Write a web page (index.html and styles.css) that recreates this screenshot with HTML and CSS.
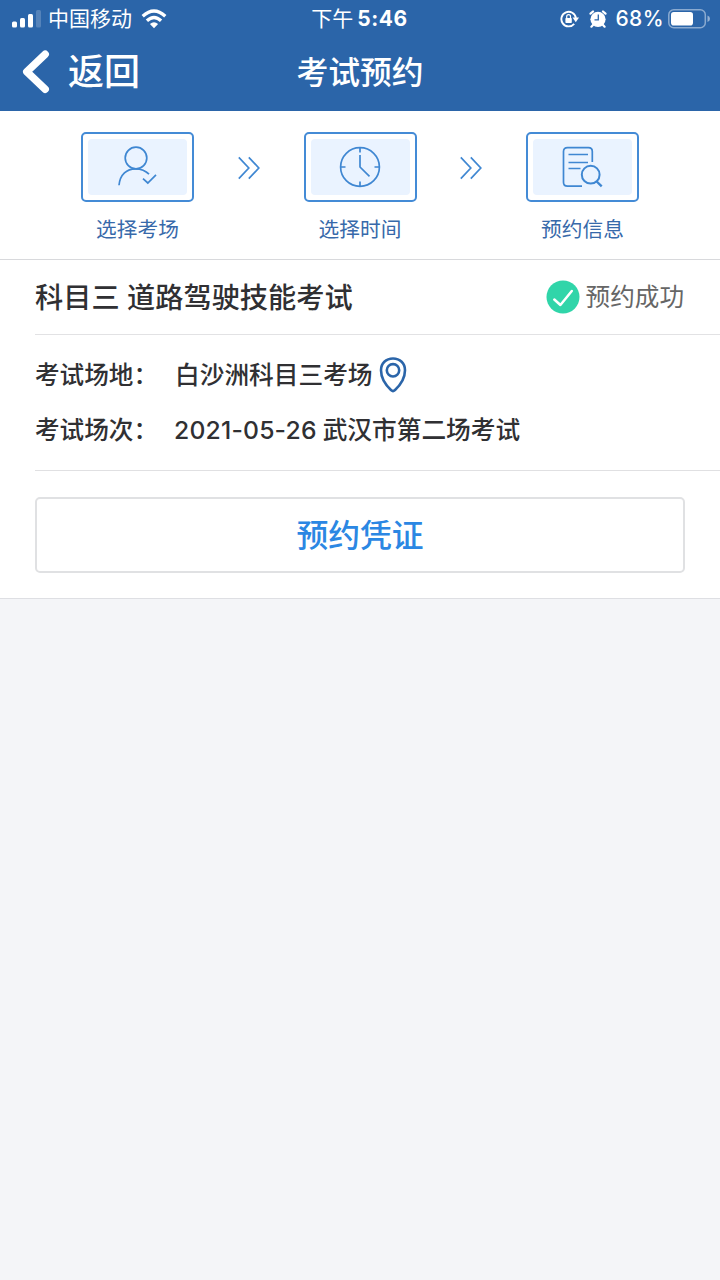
FILE: index.html
```html
<!DOCTYPE html>
<html lang="zh-CN">
<head>
<meta charset="utf-8">
<title>考试预约</title>
<link rel="stylesheet" href="styles.css">
</head>
<body>
<header class="header">
  <div class="status">
    <div class="status-left">
      <svg class="signal" width="29" height="18" viewBox="0 0 29 18" fill="#fff"><rect x="0" y="11.500" width="5" height="6" rx="1.5"/><rect x="8" y="8" width="5" height="9.500" rx="1.500"/><rect x="16" y="4" width="5" height="13.500" rx="1.500"/><rect x="24" y="0" width="5" height="17.500" rx="1.500" opacity=".2"/></svg>
      <span class="carrier">中国移动</span>
      <svg class="wifi" width="26" height="20" viewBox="0 0 26 20"><path d="M1.700 7.300Q13-3.300 24.300 7.300M5.900 11.800Q13 5.200 20.100 11.800" fill="none" stroke="#fff" stroke-width="3.300"/><path d="M13 19.200L8.900 15Q13 11.600 17.100 15Z" fill="#fff"/></svg>
    </div>
    <div class="clock"><span>下午</span><b>5:46</b></div>
    <div class="status-right">
      <svg width="19" height="18" viewBox="0 0 19 18"><path d="M15.900 8A7.300 7.300 0 1 0 14.200 13.900" fill="none" stroke="#fff" stroke-width="1.900"/><path d="M12.500 7.600H19L15.800 12.200Z" fill="#fff"/><rect x="5.400" y="8" width="6.400" height="5" rx=".7" fill="#fff"/><path d="M6.700 8.500V6.600a1.900 1.900 0 0 1 3.800 0V8.500" fill="none" stroke="#fff" stroke-width="1.200"/></svg>
      <svg class="alarm" width="18" height="18" viewBox="0 0 18 18"><path d="M1.500 3.700L4 1.500M14 1.500L16.500 3.700M4 15L2.400 16.700M14 15L15.600 16.700" stroke="#fff" stroke-width="2.200" stroke-linecap="round"/><circle cx="9" cy="9.300" r="7.600" fill="#fff"/><path d="M9.300 4.500V9.800H5.500" fill="none" stroke="#2b65a9" stroke-width="1.300"/></svg>
      <span class="percent">68%</span>
      <svg class="battery" width="43" height="20" viewBox="0 0 43 20"><rect x=".8" y=".8" width="36.500" height="18" rx="5" fill="none" stroke="#fff" stroke-opacity=".45" stroke-width="1.500"/><rect x="3" y="3" width="22" height="13.600" rx="2.800" fill="#fff"/><path d="M39.500 6.500Q42 7.500 42 9.800T39.500 13Z" fill="#fff" opacity=".5"/></svg>
    </div>
  </div>
  <div class="navbar">
    <div class="back">
      <svg width="28" height="44" viewBox="0 0 28 44"><path d="M23.200 4.300L4.800 21.800L23.200 39.200" fill="none" stroke="#fff" stroke-width="7.500" stroke-linecap="round" stroke-linejoin="round"/></svg>
      <span>返回</span>
    </div>
    <h1 class="title">考试预约</h1>
  </div>
</header>

<main class="content">
  <section class="steps">
    <div class="step">
      <div class="tile"><svg viewBox="0 0 42 42"><circle cx="19.500" cy="12" r="10.800"/><path d="M2.500 39.300C3.500 28 10.500 22.800 19 22.800C25 22.800 29.500 25 32.500 28.200M26.500 32.600L31.300 37L39.500 28.800"/></svg></div>
      <div class="step-name">选择考场</div>
    </div>
    <svg class="arrows" width="22" height="24" viewBox="0 0 22 24"><path d="M.8 1.300L10.800 12L.8 22.700M10.800 1.300L20.800 12L10.800 22.700"/></svg>
    <div class="step">
      <div class="tile"><svg viewBox="0 0 42 42"><circle cx="20.500" cy="21" r="19.400"/><path d="M20.500 1.500V6.500M20.500 35.500V40.500M1 21H6M35 21H40M20.500 9V21L30 30.300"/></svg></div>
      <div class="step-name">选择时间</div>
    </div>
    <svg class="arrows" width="22" height="24" viewBox="0 0 22 24"><path d="M.8 1.300L10.800 12L.8 22.700M10.800 1.300L20.800 12L10.800 22.700"/></svg>
    <div class="step">
      <div class="tile"><svg viewBox="0 0 42 42"><path d="M20.500 40.200H6Q2 40.200 2 36.200V5.500Q2 1.700 6 1.700H27Q30.800 1.700 30.800 5.500V16M7 8.500H26.500M7 16.500H26.500M7 22.500H19"/><circle cx="29.200" cy="28.700" r="8.900" stroke-width="2"/><path d="M35.200 35.500L40.200 40.300" stroke-width="2.300"/></svg></div>
      <div class="step-name">预约信息</div>
    </div>
  </section>

  <section class="exam">
    <div class="exam-head">
      <h2 class="subject">科目三 道路驾驶技能考试</h2>
      <div class="result">
        <svg width="34" height="34" viewBox="0 0 34 34"><circle cx="17" cy="17" r="16.500" fill="#30d5a9"/><path d="M8.300 19.500L14.400 25L25.800 11" fill="none" stroke="#fff" stroke-width="2.500" stroke-linecap="round" stroke-linejoin="round"/></svg>
        <span>预约成功</span>
      </div>
    </div>
    <div class="details">
      <div class="row"><span class="label">考试场地：</span><span class="value">白沙洲科目三考场</span><svg class="pin" width="28" height="36" viewBox="0 0 28 36"><path d="M14 1.500C7 1.500 2 6.300 2 13.200C2 21.800 7.700 29 12.200 33.200Q14 35 15.800 33.200C20.300 29 26 21.800 26 13.200C26 6.300 21 1.500 14 1.500Z"/><circle cx="14" cy="13.300" r="6.200"/></svg></div>
      <div class="row"><span class="label">考试场次：</span><span class="value"><span class="date">2021-05-26</span>武汉市第二场考试</span></div>
    </div>
  </section>
  <div class="action"><button class="voucher">预约凭证</button></div>
</main>
</body>
</html>
```

FILE: styles.css
```css
* {
  box-sizing: border-box;
}

body {
  margin: 0;
  min-height: 1280px;
  background: #f4f5f8;
  color: #303033;
  font-family: Inter, "Noto Sans CJK SC", sans-serif;
}

svg {
  display: block;
  flex: none;
}

.header {
  height: 111px;
  background: #2b65a9;
  color: #fff;
}

.status {
  display: grid;
  grid-template-columns: 1fr auto 1fr;
  align-items: center;
  height: 36px;
  padding: 0 9px 0 12px;
  font-size: 21px;
  line-height: 38px;
  white-space: nowrap;
}

.status-left,
.status-right {
  display: flex;
  align-items: center;
}

.status-right {
  justify-content: flex-end;
}

.carrier {
  margin: 0 9px 0 7px;
}

.clock {
  display: flex;
  gap: 4px;
  padding-right: 4px;
}

.clock b {
  font-weight: 700;
  letter-spacing: 0.5px;
}

.alarm {
  margin: 0 8px 0 10px;
}

.percent {
  font-weight: 500;
  letter-spacing: 0.4px;
}

.battery {
  margin-left: 4px;
}

.navbar {
  display: grid;
  grid-template-columns: 1fr auto 1fr;
  align-items: center;
  height: 71px;
  padding: 0 22px;
}

.back {
  display: flex;
  align-items: center;
  gap: 18px;
  font-size: 36px;
  font-weight: 500;
  line-height: 44px;
}

.title {
  margin: 0;
  padding-top: 2px;
  font-size: 31.8px;
  font-weight: 500;
  line-height: 44px;
}

.content {
  background: #fff;
  border-bottom: 1px solid #dedfe3;
}

.steps {
  display: flex;
  justify-content: space-between;
  height: 149px;
  padding: 21px 81px 0;
  border-bottom: 1px solid #d8d9dc;
}

.step {
  width: 113px;
}

.tile {
  height: 70px;
  padding: 5px;
  border: 2px solid #448bd6;
  border-radius: 5px;
}

.tile svg {
  width: 100%;
  height: 56px;
  padding: 7px;
  border-radius: 4px;
  background: #eaf3ff;
}

.tile svg,
.arrows {
  fill: none;
  stroke: #3f87d2;
  stroke-width: 1.7;
}

.arrows {
  margin-top: 24px;
}

.step-name {
  margin-top: 13px;
  color: #3769aa;
  font-size: 20.7px;
  line-height: 30px;
  text-align: center;
  white-space: nowrap;
}

.exam {
  padding-left: 35px;
}

.exam-head {
  display: flex;
  align-items: center;
  justify-content: space-between;
  height: 75px;
  padding-right: 35px;
  border-bottom: 1px solid #e2e2e4;
}

.subject {
  margin: 0;
  padding-top: 1px;
  font-size: 28.2px;
  font-weight: 500;
  line-height: 40px;
}

.result {
  display: flex;
  align-items: center;
  gap: 6px;
  margin-right: 1px;
  color: #666;
  font-size: 24.6px;
  line-height: 36px;
}

.details {
  display: grid;
  gap: 19px;
  height: 136px;
  padding-top: 22px;
  align-content: start;
  border-bottom: 1px solid #e0e0e2;
  font-size: 24.6px;
  font-weight: 500;
}

.row {
  display: flex;
  align-items: center;
  height: 36px;
  line-height: 36px;
}

.label {
  width: 140px;
}

.value {
  font-size: 24.7px;
}

.pin {
  margin-left: 6.5px;
  fill: none;
  stroke: #2b65a9;
  stroke-width: 2.6;
}

.date {
  margin: 0 6px 0 -1px;
  letter-spacing: 0.2px;
}

.action {
  padding: 26px 35px 25px;
}

.voucher {
  display: block;
  width: 100%;
  height: 76px;
  border: 2px solid #e0e1e3;
  border-radius: 5px;
  background: #fff;
  color: #2b87e3;
  font: 500 31.8px/72px Inter, "Noto Sans CJK SC", sans-serif;
}
```
